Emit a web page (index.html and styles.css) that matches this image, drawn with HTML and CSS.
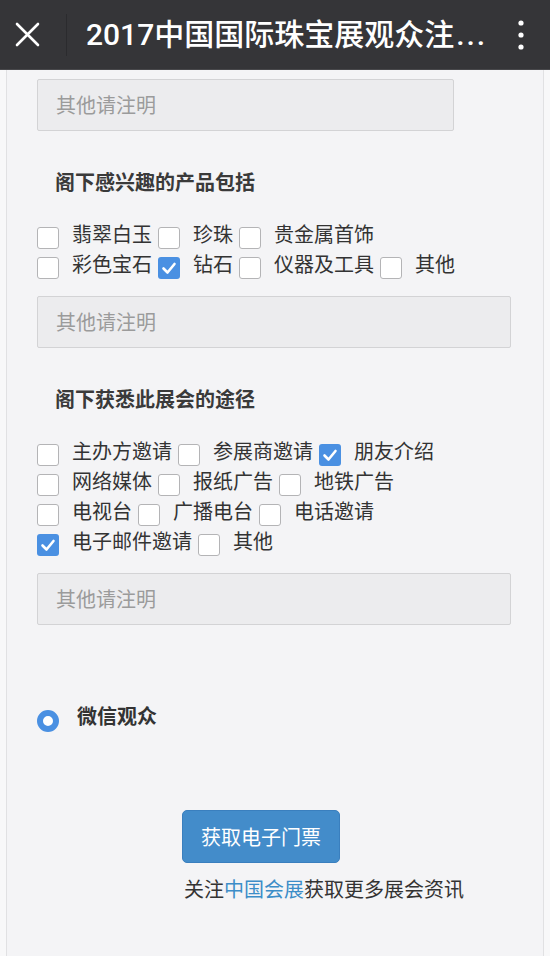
FILE: index.html
```html
<!DOCTYPE html>
<html lang="zh-CN">
<head>
<meta charset="utf-8">
<title>2017中国国际珠宝展观众注册</title>
<link rel="stylesheet" href="styles.css">
</head>
<body>
<header class="topbar">
  <span class="close">
    <svg viewBox="0 0 25 25" width="25" height="25"><path d="M2 2 L23 23 M23 2 L2 23" stroke="#fff" stroke-width="2.6" stroke-linecap="round" fill="none"/></svg>
  </span>
  <span class="divider"></span>
  <h1 class="title">2017中国国际珠宝展观众注<span class="dots">...</span></h1>
  <span class="more">
    <svg viewBox="0 0 6 30" width="6" height="30"><circle cx="3" cy="3" r="2.6" fill="#fff"/><circle cx="3" cy="15" r="2.6" fill="#fff"/><circle cx="3" cy="27" r="2.6" fill="#fff"/></svg>
  </span>
</header>

<main class="card">
  <div class="field field-short">其他请注明</div>

  <h2 class="q">阁下感兴趣的产品包括</h2>
  <div class="opts">
    <div class="row">
      <span class="cb"></span><span class="lbl">翡翠白玉</span>
      <span class="cb"></span><span class="lbl">珍珠</span>
      <span class="cb"></span><span class="lbl">贵金属首饰</span>
    </div>
    <div class="row">
      <span class="cb"></span><span class="lbl">彩色宝石</span>
      <span class="cb checked"><svg viewBox="0 0 22 22" width="22" height="22"><path d="M5.5 11.5 L9.5 15.5 L16.5 7" stroke="#fff" stroke-width="2.6" fill="none" stroke-linecap="round" stroke-linejoin="round"/></svg></span><span class="lbl">钻石</span>
      <span class="cb"></span><span class="lbl">仪器及工具</span>
      <span class="cb"></span><span class="lbl">其他</span>
    </div>
  </div>
  <div class="field">其他请注明</div>

  <h2 class="q">阁下获悉此展会的途径</h2>
  <div class="opts">
    <div class="row">
      <span class="cb"></span><span class="lbl">主办方邀请</span>
      <span class="cb"></span><span class="lbl">参展商邀请</span>
      <span class="cb checked"><svg viewBox="0 0 22 22" width="22" height="22"><path d="M5.5 11.5 L9.5 15.5 L16.5 7" stroke="#fff" stroke-width="2.6" fill="none" stroke-linecap="round" stroke-linejoin="round"/></svg></span><span class="lbl">朋友介绍</span>
    </div>
    <div class="row">
      <span class="cb"></span><span class="lbl">网络媒体</span>
      <span class="cb"></span><span class="lbl">报纸广告</span>
      <span class="cb"></span><span class="lbl">地铁广告</span>
    </div>
    <div class="row">
      <span class="cb"></span><span class="lbl">电视台</span>
      <span class="cb"></span><span class="lbl">广播电台</span>
      <span class="cb"></span><span class="lbl">电话邀请</span>
    </div>
    <div class="row">
      <span class="cb checked"><svg viewBox="0 0 22 22" width="22" height="22"><path d="M5.5 11.5 L9.5 15.5 L16.5 7" stroke="#fff" stroke-width="2.6" fill="none" stroke-linecap="round" stroke-linejoin="round"/></svg></span><span class="lbl">电子邮件邀请</span>
      <span class="cb"></span><span class="lbl">其他</span>
    </div>
  </div>
  <div class="field">其他请注明</div>

  <div class="radio-row">
    <span class="radio"></span><span class="radio-lbl">微信观众</span>
  </div>

  <div class="actions">
    <button class="btn" type="button">获取电子门票</button>
    <p class="note">关注<span class="link">中国会展</span>获取更多展会资讯</p>
  </div>
</main>
</body>
</html>
```

FILE: styles.css
```css
html, body {
  margin: 0;
  padding: 0;
}
body {
  background: #f8f8f9;
  font-family: "Noto Sans CJK SC", "Noto Sans", sans-serif;
  color: #333;
}

.topbar {
  height: 70px;
  background: #353538;
  display: flex;
  align-items: center;
  box-sizing: border-box;
  border-bottom: 1px solid #48484b;
}
.close {
  display: flex;
  margin-left: 15px;
  width: 25px;
  height: 25px;
}
.divider {
  width: 1px;
  height: 42px;
  background: #2b2b2e;
  margin-left: 26px;
}
.title {
  margin: 0 0 0 19px;
  flex: 1;
  font-family: "Roboto", "Noto Sans CJK SC", sans-serif;
  font-size: 30px;
  font-weight: 500;
  color: #fff;
  white-space: nowrap;
  overflow: hidden;
  line-height: 38px;
}
.dots {
  letter-spacing: 2px;
  margin-left: 2px;
}
.more {
  display: flex;
  margin-right: 26px;
}

.card {
  margin: 0 6px;
  border-left: 1px solid #e1e1e3;
  border-right: 1px solid #e1e1e3;
  background: #f4f4f6;
  padding: 9px 0 60px 30px;
}

.field {
  box-sizing: border-box;
  width: 474px;
  height: 52px;
  border: 1px solid #d3d3d5;
  border-radius: 2px;
  background: #ececee;
  padding-left: 18px;
  font-size: 20px;
  line-height: 50px;
  color: #9b9b9b;
}
.field-short {
  width: 417px;
}

.q {
  margin: 36px 0 22px 18px;
  font-size: 20px;
  font-weight: 700;
  line-height: 30px;
  color: #3a3a3a;
}

.opts {
  margin-bottom: 17px;
}
.row {
  display: flex;
  align-items: flex-start;
  height: 30px;
}
.cb {
  flex: none;
  box-sizing: border-box;
  width: 22px;
  height: 22px;
  margin-top: 8px;
  margin-right: 13px;
  border: 1px solid #b4b4b6;
  border-radius: 3px;
  background: #fff;
  display: flex;
}
.cb.checked {
  border: none;
  background: #4a90e2;
}
.lbl {
  font-size: 20px;
  line-height: 30px;
  color: #333;
  margin-right: 6px;
}

.radio-row {
  display: flex;
  align-items: flex-start;
  margin-top: 76px;
  height: 30px;
}
.radio {
  box-sizing: border-box;
  width: 22px;
  height: 22px;
  margin-top: 9px;
  border: 6px solid #4a90e2;
  border-radius: 50%;
  background: #fff;
}
.radio-lbl {
  margin-left: 18px;
  font-size: 20px;
  font-weight: 700;
  line-height: 30px;
  color: #333;
}

.actions {
  margin-top: 79px;
  padding-left: 145px;
}
.btn {
  display: block;
  box-sizing: border-box;
  width: 158px;
  height: 53px;
  margin: 0;
  padding: 0;
  border: 1px solid #3a7fbe;
  border-radius: 5px;
  background: #438cca;
  color: #fff;
  font-family: "Noto Sans CJK SC", "Noto Sans", sans-serif;
  font-size: 20px;
  line-height: 51px;
  text-align: center;
}
.note {
  margin: 11px 0 0 2px;
  font-size: 20px;
  line-height: 30px;
  color: #333;
}
.link {
  color: #3c8dc8;
}
```
